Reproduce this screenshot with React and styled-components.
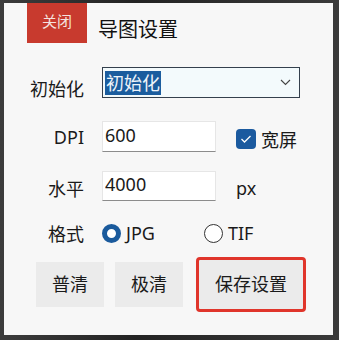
import React, { useState } from "react";
import styled, { createGlobalStyle } from "styled-components";

const GlobalStyle = createGlobalStyle`
  html, body {
    margin: 0;
    padding: 0;
    background: #2e2e2e;
  }
  * {
    box-sizing: border-box;
  }
`;

const Backdrop = styled.div`
  width: 339px;
  height: 340px;
  padding: 3px 6px 5px 4px;
  background: linear-gradient(90deg, #3c3c3c 0%, #232323 40%, #3a3a3a 100%);
  font-family: "Noto Sans", "Noto Sans CJK SC", sans-serif;
  color: #1a1a1a;
`;
const Panel = styled.div`
  width: 100%;
  height: 100%;
  background-color: #f7f7f7;
  display: flex;
  flex-direction: column;
`;
const Header = styled.div`
  display: flex;
  flex-direction: row;
  align-items: center;
  height: 40px;
  padding-left: 23px;
`;
const CloseButton = styled.button`
  width: 60px;
  height: 40px;
  border: none;
  outline: none;
  background-color: #c83a2e;
  color: #f4e2df;
  font-family: inherit;
  font-size: 15px;
  padding: 0 0 6px;
  cursor: pointer;
`;
const Title = styled.div`
  margin-left: 11px;
  margin-top: 10px;
  font-size: 20px;
  color: #111;
`;
const Row = styled.div`
  display: flex;
  flex-direction: row;
  align-items: center;
  height: ${(p) => p.$height}px;
  margin-top: ${(p) => p.$top}px;
`;
const Label = styled.div`
  width: 80px;
  text-align: right;
  font-size: 18px;
  margin-right: 18px;
  padding-top: ${(p) => p.$drop || 0}px;
`;
const SelectBox = styled.div`
  width: 198px;
  height: 31px;
  border: 1px solid #34404d;
  background-color: #f3fafc;
  display: flex;
  flex-direction: row;
  align-items: center;
  justify-content: space-between;
  padding: 0 8px 0 2px;
`;
const Highlight = styled.span`
  background-color: #1b5d9e;
  color: #eef4fa;
  font-size: 18px;
  line-height: 24px;
  padding: 0 1px;
`;
const TextInput = styled.input`
  width: 114px;
  height: ${(p) => p.$height}px;
  border: 1px solid #e6e6e6;
  border-bottom: 1px solid #8c8c8c;
  background-color: #ffffff;
  outline: none;
  font-family: inherit;
  font-size: 18px;
  color: #1a1a1a;
  padding: 0 0 4px 2px;
`;
const CheckLabel = styled.label`
  display: flex;
  flex-direction: row;
  align-items: center;
  margin-left: 20px;
  margin-top: 4px;
  font-size: 18px;
  cursor: pointer;
`;
const CheckBox = styled.span`
  width: 20px;
  height: 20px;
  border-radius: 4px;
  background-color: #1b5a9f;
  display: flex;
  align-items: center;
  justify-content: center;
  margin-right: 5px;
`;
const Unit = styled.div`
  margin-left: 20px;
  margin-top: 4px;
  font-size: 18px;
`;
const RadioOption = styled.label`
  display: flex;
  flex-direction: row;
  align-items: center;
  font-size: 18px;
  width: ${(p) => p.$width}px;
  cursor: pointer;
`;
const RadioDot = styled.span`
  width: 19px;
  height: 19px;
  border-radius: 50%;
  border: ${(p) => (p.$checked ? "5px solid #1a5a9c" : "1px solid #333")};
  background-color: #ffffff;
  margin-right: 5px;
`;
const ButtonRow = styled.div`
  display: flex;
  flex-direction: row;
  align-items: center;
  margin-top: 11px;
  padding-left: 32px;
  gap: 11px;
`;
const ActionButton = styled.button`
  width: 68px;
  height: 45px;
  border: none;
  outline: none;
  background-color: #ebebeb;
  font-family: inherit;
  font-size: 18px;
  color: #1a1a1a;
  padding: 0 0 3px;
  cursor: pointer;
`;
const SaveButton = styled(ActionButton)`
  width: 110px;
  height: 55px;
  margin-left: 2px;
  border: 3px solid #e0352b;
  border-radius: 4px;
`;

const Chevron = () => (
  <svg width="11" height="7" viewBox="0 0 11 7">
    <path d="M1 1 L5.5 5.5 L10 1" fill="none" stroke="#444" strokeWidth="1.1" />
  </svg>
);

const Tick = () => (
  <svg width="12" height="10" viewBox="0 0 12 10">
    <path d="M1.5 5 L4.5 8 L10.5 2" fill="none" stroke="#ffffff" strokeWidth="1.3" />
  </svg>
);

const App = () => {
  const [dpi, setDpi] = useState("600");
  const [width, setWidth] = useState("4000");
  const [wide, setWide] = useState(true);
  const [format, setFormat] = useState("JPG");

  return (
    <Backdrop>
      <GlobalStyle />
      <Panel>
        <Header>
          <CloseButton>关闭</CloseButton>
          <Title>导图设置</Title>
        </Header>
        <Row $height={31} $top={24}>
          <Label $drop={10}>初始化</Label>
          <SelectBox>
            <Highlight>初始化</Highlight>
            <Chevron />
          </SelectBox>
        </Row>
        <Row $height={31} $top={23}>
          <Label>DPI</Label>
          <TextInput $height={31} value={dpi} onChange={(e) => setDpi(e.target.value)} />
          <CheckLabel onClick={() => setWide(!wide)}>
            <CheckBox>{wide && <Tick />}</CheckBox>
            宽屏
          </CheckLabel>
        </Row>
        <Row $height={30} $top={19}>
          <Label $drop={4}>水平</Label>
          <TextInput $height={30} value={width} onChange={(e) => setWidth(e.target.value)} />
          <Unit>px</Unit>
        </Row>
        <Row $height={26} $top={19}>
          <Label $width={80}>格式</Label>
          <RadioOption $width={102} onClick={() => setFormat("JPG")}>
            <RadioDot $checked={format === "JPG"} />
            JPG
          </RadioOption>
          <RadioOption $width={60} onClick={() => setFormat("TIF")}>
            <RadioDot $checked={format === "TIF"} />
            TIF
          </RadioOption>
        </Row>
        <ButtonRow>
          <ActionButton>普清</ActionButton>
          <ActionButton>极清</ActionButton>
          <SaveButton>保存设置</SaveButton>
        </ButtonRow>
      </Panel>
    </Backdrop>
  );
};

export default App;
